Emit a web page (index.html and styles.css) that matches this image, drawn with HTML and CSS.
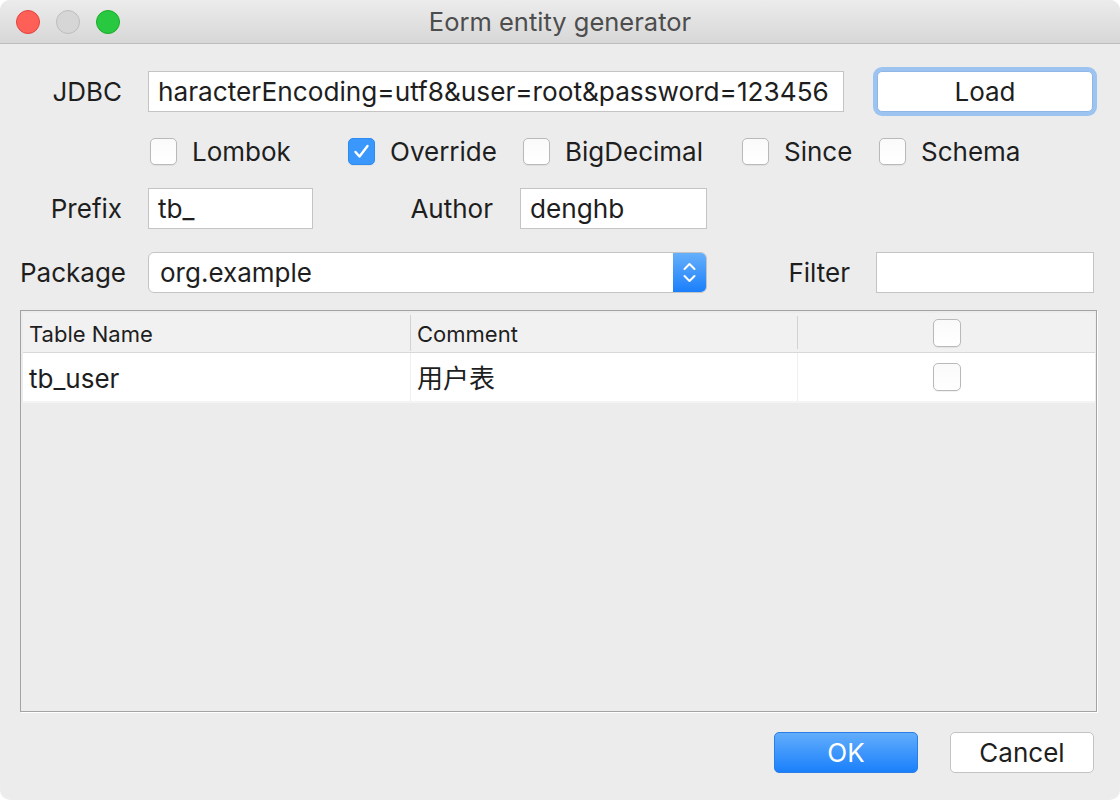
FILE: index.html
```html
<!DOCTYPE html>
<html>
<head>
<meta charset="utf-8">
<link rel="stylesheet" href="styles.css">
</head>
<body>
<div class="window">
  <div class="titlebar">
    <div class="lights"><span class="light red"></span><span class="light gray"></span><span class="light green"></span></div>
    <div class="title">Eorm entity generator</div>
    <div></div>
  </div>
  <div class="content">
    <div class="row">
      <span class="lbl">JDBC</span>
      <div class="input jdbc">haracterEncoding=utf8&amp;user=root&amp;password=123456</div>
      <div class="focus-ring"><div class="btn load">Load</div></div>
    </div>
    <div class="checks">
      <div class="check"><span class="box"></span>Lombok</div>
      <div class="check"><span class="box checked"><svg width="27" height="27" viewBox="0 0 27 27"><path d="M7.5 14 L11.5 18.5 L19.5 8" fill="none" stroke="#fff" stroke-width="2.4" stroke-linecap="round" stroke-linejoin="round"/></svg></span>Override</div>
      <div class="check"><span class="box"></span>BigDecimal</div>
      <div class="check"><span class="box"></span>Since</div>
      <div class="check"><span class="box"></span>Schema</div>
    </div>
    <div class="row gap">
      <span class="lbl">Prefix</span>
      <div class="input prefix">tb_</div>
      <span class="lbl author-lbl">Author</span>
      <div class="input author">denghb</div>
    </div>
    <div class="row gap">
      <span class="lbl">Package</span>
      <div class="select">
        <span class="select-text">org.example</span>
        <span class="stepper"><svg width="33" height="39" viewBox="0 0 33 39"><path d="M11.5 16 L16.5 11 L21.5 16" fill="none" stroke="#fff" stroke-width="2" stroke-linecap="round" stroke-linejoin="round"/><path d="M11.5 23 L16.5 28 L21.5 23" fill="none" stroke="#fff" stroke-width="2" stroke-linecap="round" stroke-linejoin="round"/></svg></span>
      </div>
      <span class="lbl filter-lbl">Filter</span>
      <div class="input filter"></div>
    </div>
    <div class="table">
      <div class="thead">
        <div class="th">Table Name</div>
        <div class="th sep">Comment</div>
        <div class="th sep center"><span class="box small"></span></div>
      </div>
      <div class="tr">
        <div class="td">tb_user</div>
        <div class="td sep cjk">用户表</div>
        <div class="td sep center"><span class="box small"></span></div>
      </div>
    </div>
    <div class="actions">
      <div class="btn ok">OK</div>
      <div class="btn cancel">Cancel</div>
    </div>
  </div>
</div>
</body>
</html>
```

FILE: styles.css
```css
html, body {
  margin: 0;
  padding: 0;
  background: #ffffff;
}
body {
  font-family: Inter, "Noto Sans CJK SC", sans-serif;
  color: #1e1e1e;
  line-height: 1.2;
}
.window {
  width: 1120px;
  height: 800px;
  background: #ececec;
  border-radius: 10px;
  overflow: hidden;
  display: flex;
  flex-direction: column;
}
.titlebar {
  height: 43px;
  flex: none;
  border-bottom: 1px solid #bdbdbd;
  background: linear-gradient(#ececec, #d7d7d7);
  display: grid;
  grid-template-columns: 1fr auto 1fr;
  align-items: center;
}
.lights {
  display: flex;
  gap: 16px;
  padding-left: 16px;
}
.light {
  width: 22px;
  height: 22px;
  border-radius: 50%;
  border: 1px solid;
}
.red { background: #fe5f57; border-color: #e0443e; }
.gray { background: #d6d6d6; border-color: #bdbdbd; }
.green { background: #28c840; border-color: #1aab29; }
.title {
  font-size: 25.5px;
  color: #4d4d4d;
  padding-top: 2px;
}
.content {
  flex: 1;
  display: flex;
  flex-direction: column;
  padding: 23px 0 0 20px;
}
.row {
  display: flex;
  align-items: center;
}
.row.gap {
  margin-top: 23px;
}
.lbl {
  flex: none;
  width: 102px;
  margin-right: 26px;
  text-align: right;
  font-size: 26px;
  color: #1e1e1e;
}
.input {
  flex: none;
  box-sizing: border-box;
  height: 41px;
  border: 1px solid #c4c4c4;
  background: #fff;
  font-size: 26.2px;
  padding: 0 9px;
  display: flex;
  align-items: center;
  white-space: nowrap;
  overflow: hidden;
  color: #1e1e1e;
}
.jdbc { width: 696px; }
.focus-ring {
  margin-left: 29px;
  padding: 4px;
  border-radius: 9px;
  background: #9dc3f1;
}
.btn {
  box-sizing: border-box;
  height: 41px;
  display: flex;
  align-items: center;
  justify-content: center;
  font-size: 26px;
  border-radius: 5px;
}
.load {
  width: 216px;
  background: #fff;
  color: #1e1e1e;
  border: 1px solid #8fb6e6;
}
.checks {
  display: grid;
  grid-template-columns: 198px 175px 219px 137px auto;
  margin: 22px 0 0 130px;
  height: 27px;
}
.check {
  display: flex;
  align-items: center;
  gap: 15px;
  font-size: 26px;
  line-height: 27px;
  color: #1e1e1e;
}
.box {
  flex: none;
  box-sizing: border-box;
  width: 27px;
  height: 27px;
  border: 1px solid #b9b9b9;
  border-radius: 5px;
  background: linear-gradient(#fafafa, #fff);
  box-shadow: 0 1px 1px rgba(0, 0, 0, 0.06);
  display: block;
}
.box.checked {
  background: #3a98fc;
  border-color: #2f8bf0;
}
.box.checked svg {
  display: block;
  margin: -1px;
}
.prefix { width: 165px; }
.author-lbl { width: 180px; margin-right: 27px; }
.author { width: 187px; }
.select {
  flex: none;
  box-sizing: border-box;
  width: 559px;
  height: 41px;
  border: 1px solid #c4c4c4;
  border-radius: 6px;
  background: #fff;
  display: flex;
  align-items: center;
  overflow: hidden;
}
.select-text {
  flex: 1;
  padding-left: 11px;
  font-size: 26px;
  color: #1e1e1e;
}
.stepper {
  width: 33px;
  height: 39px;
  background: linear-gradient(#66b0fb, #1a7ffb);
  display: block;
}
.stepper svg { display: block; }
.filter-lbl { width: 143px; }
.filter { width: 218px; }
.table {
  margin-top: 17px;
  width: 1077px;
  height: 402px;
  box-sizing: border-box;
  border: 1px solid #a3a3a3;
  box-shadow: 1px 1px 0 #fff;
  padding: 2px 1px 2px 2px;
  background: #ececec;
}
.thead {
  display: grid;
  grid-template-columns: 387px 387px 1fr;
  align-items: center;
  height: 39px;
  background: #f1f1f1;
  border-bottom: 1px solid #d8d8d8;
}
.th {
  height: 33px;
  display: flex;
  align-items: center;
  padding-left: 6px;
  font-size: 22px;
  color: #1e1e1e;
}
.th:first-child, .td:first-child { padding-top: 3px; }
.th.sep:not(.center), .td.sep:not(.center) { padding-top: 3px; }
.th.sep { border-left: 1px solid #d2d2d2; }
.tr {
  display: grid;
  grid-template-columns: 387px 387px 1fr;
  height: 48px;
  background: #fff;
  border-bottom: 2px solid #f4f4f4;
}
.td {
  display: flex;
  align-items: center;
  padding-left: 6px;
  font-size: 26px;
  color: #1e1e1e;
}
.td.sep { border-left: 1px solid #f0f0f0; }
.th.center, .td.center { justify-content: center; padding-left: 0; }
.box.small {
  width: 28px;
  height: 28px;
}
.actions {
  display: flex;
  justify-content: flex-end;
  gap: 32px;
  margin-top: 20px;
  padding-right: 26px;
}
.ok {
  width: 144px;
  background: linear-gradient(#62adfc, #1a80fb);
  border: 1px solid #2a7fe6;
  color: #fff;
}
.cancel {
  width: 144px;
  background: #fff;
  border: 1px solid #c3c3c3;
  color: #1e1e1e;
}
```
